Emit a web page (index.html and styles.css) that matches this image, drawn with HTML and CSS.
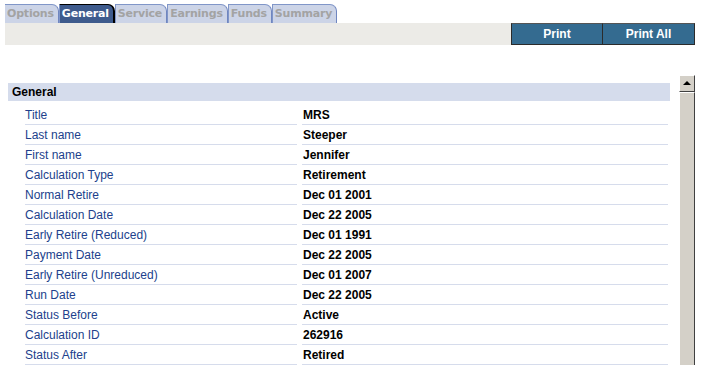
FILE: index.html
```html
<!DOCTYPE html>
<html lang="en">
<head>
    <meta charset="UTF-8">
    <title>Calculation - General</title>
    <link rel="stylesheet" href="styles.css">
</head>
<body>
    <div class="tabs">
        <span class="tab">Options</span>
        <span class="tab active">General</span>
        <span class="tab">Service</span>
        <span class="tab">Earnings</span>
        <span class="tab">Funds</span>
        <span class="tab">Summary</span>
    </div>
    <div class="toolbar">
        <button class="print">Print</button>
        <button class="print">Print All</button>
    </div>

    <div class="content">
        <div class="panel">
            <div class="section-title">General</div>
            <div class="rows">
                <div class="label">Title</div><div class="value">MRS</div>
                <div class="label">Last name</div><div class="value">Steeper</div>
                <div class="label">First name</div><div class="value">Jennifer</div>
                <div class="label">Calculation Type</div><div class="value">Retirement</div>
                <div class="label">Normal Retire</div><div class="value">Dec 01 2001</div>
                <div class="label">Calculation Date</div><div class="value">Dec 22 2005</div>
                <div class="label">Early Retire (Reduced)</div><div class="value">Dec 01 1991</div>
                <div class="label">Payment Date</div><div class="value">Dec 22 2005</div>
                <div class="label">Early Retire (Unreduced)</div><div class="value">Dec 01 2007</div>
                <div class="label">Run Date</div><div class="value">Dec 22 2005</div>
                <div class="label">Status Before</div><div class="value">Active</div>
                <div class="label">Calculation ID</div><div class="value">262916</div>
                <div class="label">Status After</div><div class="value">Retired</div>
            </div>
        </div>
        <div class="scrollbar">
            <div class="scroll-up"></div>
            <div class="scroll-track"></div>
        </div>
    </div>
</body>
</html>
```

FILE: styles.css
```css
body {
    margin: 0;
    background-color: #ffffff;
    font-family: "Liberation Sans", Arial, sans-serif;
    font-size: 12px;
    height: 367px;
    overflow: hidden;
}
.tabs {
    display: flex;
    margin: 4px 0 0 5px;
    height: 19px;
    align-items: flex-end;
}
.tab {
    height: 18px;
    line-height: 18px;
    padding: 0 4px 0 2px;
    background-color: #ccd4e7;
    color: #a3a3a3;
    font-family: "DejaVu Sans", Verdana, sans-serif;
    font-weight: bold;
    font-size: 11px;
    letter-spacing: -0.2px;
    border-top: 1px solid #8096c8;
    border-right: 1px solid #6f86c0;
    border-left: 1px solid #8096c8;
    border-top-right-radius: 7px;
}
.tab:first-child {
    border-left: none;
}
.tab.active {
    background-color: #3e5b8d;
    color: #ffffff;
    border-top: 1px solid #000000;
    border-right: 2px solid #000000;
}
.toolbar {
    display: flex;
    justify-content: flex-end;
    margin: 0 25px 0 5px;
    height: 22px;
    background-color: #ecebe7;
}
.print {
    width: 92px;
    height: 22px;
    margin: 0;
    background-color: #346b90;
    color: #ffffff;
    font-family: "Liberation Sans", Arial, sans-serif;
    font-weight: bold;
    font-size: 12px;
    border: 1px solid #2b2b2b;
    border-top-color: #555555;
    padding: 0;
}
.print + .print {
    margin-left: -1px;
    width: 93px;
}
.content {
    display: flex;
    margin-top: 30px;
}
.panel {
    width: 662px;
    margin: 8px 0 0 8px;
}
.section-title {
    height: 18px;
    line-height: 18px;
    padding-left: 4px;
    background-color: #d5dcec;
    font-weight: bold;
    color: #000000;
}
.rows {
    display: grid;
    grid-template-columns: 272px 366px;
    column-gap: 5px;
    margin: 4px 0 0 17px;
}
.label, .value {
    height: 19px;
    line-height: 20px;
    border-bottom: 1px solid #d6dcec;
}
.label {
    color: #213f8c;
}
.value {
    font-weight: bold;
    color: #000000;
    padding-left: 1px;
}
.scrollbar {
    margin-left: 9px;
    width: 16px;
    display: flex;
    flex-direction: column;
}
.scroll-up {
    background-color: #d4d0c8;
    border-top: 1px solid #ffffff;
    border-left: 1px solid #ffffff;
    border-right: 1px solid #404040;
    border-bottom: 1px solid #404040;
    box-sizing: border-box;
    height: 17px;
    position: relative;
}
.scroll-up::after {
    content: "";
    position: absolute;
    left: 3px;
    top: 5px;
    border-left: 4px solid transparent;
    border-right: 4px solid transparent;
    border-bottom: 4px solid #000000;
}
.scroll-track {
    flex: 1;
    height: 300px;
    background-color: #d4d0c8;
    border-left: 1px solid #ffffff;
    border-right: 1px solid #404040;
    border-top: 1px solid #ffffff;
    box-sizing: border-box;
}
```
